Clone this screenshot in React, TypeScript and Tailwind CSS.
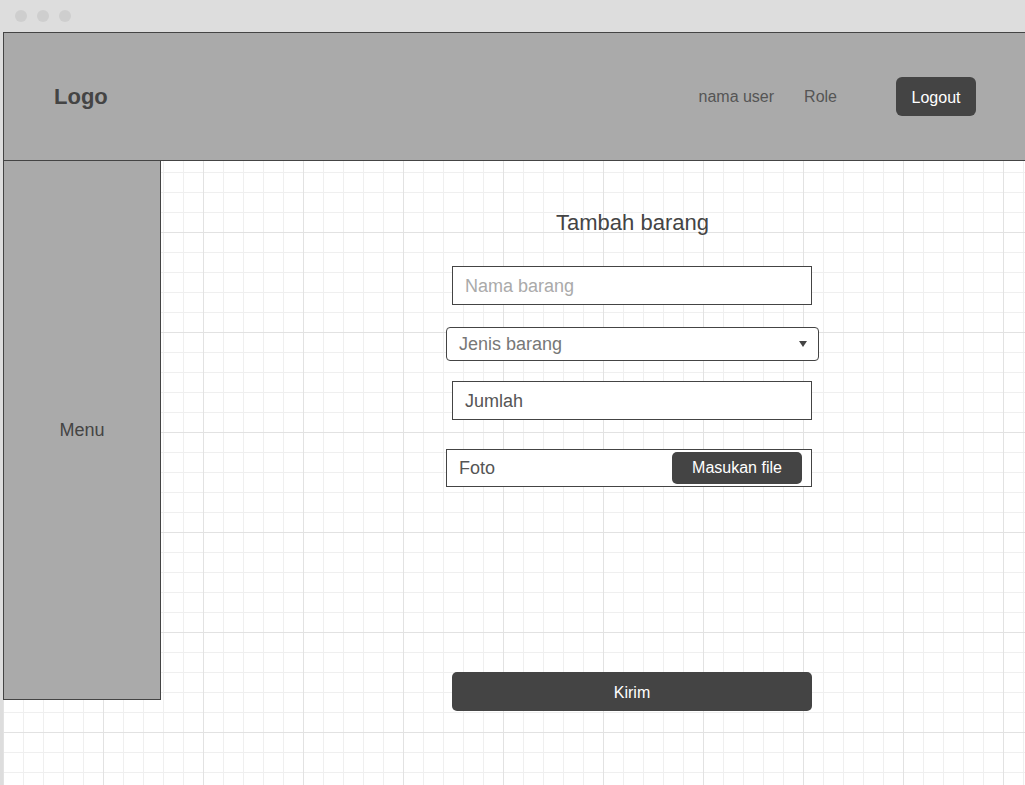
const Dot = () => <span className="w-3 h-3 rounded-full bg-[#cecece]" />;

const App = () => {
  return (
    <div className="min-h-screen w-full bg-[#dddddd] font-['Liberation_Sans',Arial,sans-serif] overflow-hidden">
      {/* Window chrome */}
      <div className="h-8 flex items-center gap-[10px] pl-[15px]">
        <Dot />
        <Dot />
        <Dot />
      </div>

      {/* Page canvas */}
      <div className="ml-[3px] h-[753px] flex flex-col bg-white bg-[linear-gradient(to_right,#e2e2e2_1px,transparent_1px),linear-gradient(to_bottom,#e2e2e2_1px,transparent_1px),linear-gradient(to_right,#efefef_1px,transparent_1px),linear-gradient(to_bottom,#efefef_1px,transparent_1px)] bg-[size:100px_100px,100px_100px,20px_20px,20px_20px]">
        {/* Header */}
        <header className="h-[129px] shrink-0 flex items-center bg-[#aaaaaa] border border-r-0 border-[#444]">
          <div className="pl-[50px] text-[22px] font-bold text-[#444]">Logo</div>
          <div className="ml-auto flex items-center text-base text-[#555]">
            <span>nama user</span>
            <span className="ml-[30px]">Role</span>
            <button className="ml-[59px] mr-[49px] h-[39px] w-20 pt-[2px] rounded-md bg-[#444] text-white text-base">
              Logout
            </button>
          </div>
        </header>

        <div className="flex flex-1">
          {/* Sidebar */}
          <aside className="w-[158px] h-[539px] shrink-0 flex items-center justify-center bg-[#aaaaaa] border-l border-r border-b border-[#444] text-lg text-[#444]">
            Menu
          </aside>

          {/* Form */}
          <main className="flex-1">
            <div className="ml-[285px] w-[373px] flex flex-col pt-[49px]">
              <h1 className="text-center text-[22px] leading-[26px] text-[#444]">
                Tambah barang
              </h1>

              <div className="mt-[30px] ml-[6px] w-[360px] h-[39px] flex items-center px-[12px] bg-white border border-[#444] text-lg text-[#aaa]">
                Nama barang
              </div>

              <div className="mt-[22px] w-[373px] h-[34px] flex items-center justify-between pl-[12px] pr-[11px] bg-white border border-[#444] rounded-[4px] text-lg text-[#777]">
                <span>Jenis barang</span>
                <svg width="8" height="6" viewBox="0 0 8 6" className="fill-[#444]">
                  <path d="M0 0h8L4 6z" />
                </svg>
              </div>

              <div className="mt-[20px] ml-[6px] w-[360px] h-[39px] flex items-center px-[12px] bg-white border border-[#444] text-lg text-[#555]">
                Jumlah
              </div>

              <div className="mt-[29px] w-[366px] h-[38px] flex items-center justify-between pl-[12px] pr-[9px] bg-white border border-[#444] text-lg text-[#555]">
                <span>Foto</span>
                <button className="h-[32px] w-[130px] rounded-[5px] bg-[#444] text-white text-base">
                  Masukan file
                </button>
              </div>

              <button className="mt-[185px] ml-[6px] w-[360px] h-[39px] pt-[2px] rounded-[5px] bg-[#444] text-white text-base">
                Kirim
              </button>
            </div>
          </main>
        </div>
      </div>
    </div>
  );
};

export default App;
